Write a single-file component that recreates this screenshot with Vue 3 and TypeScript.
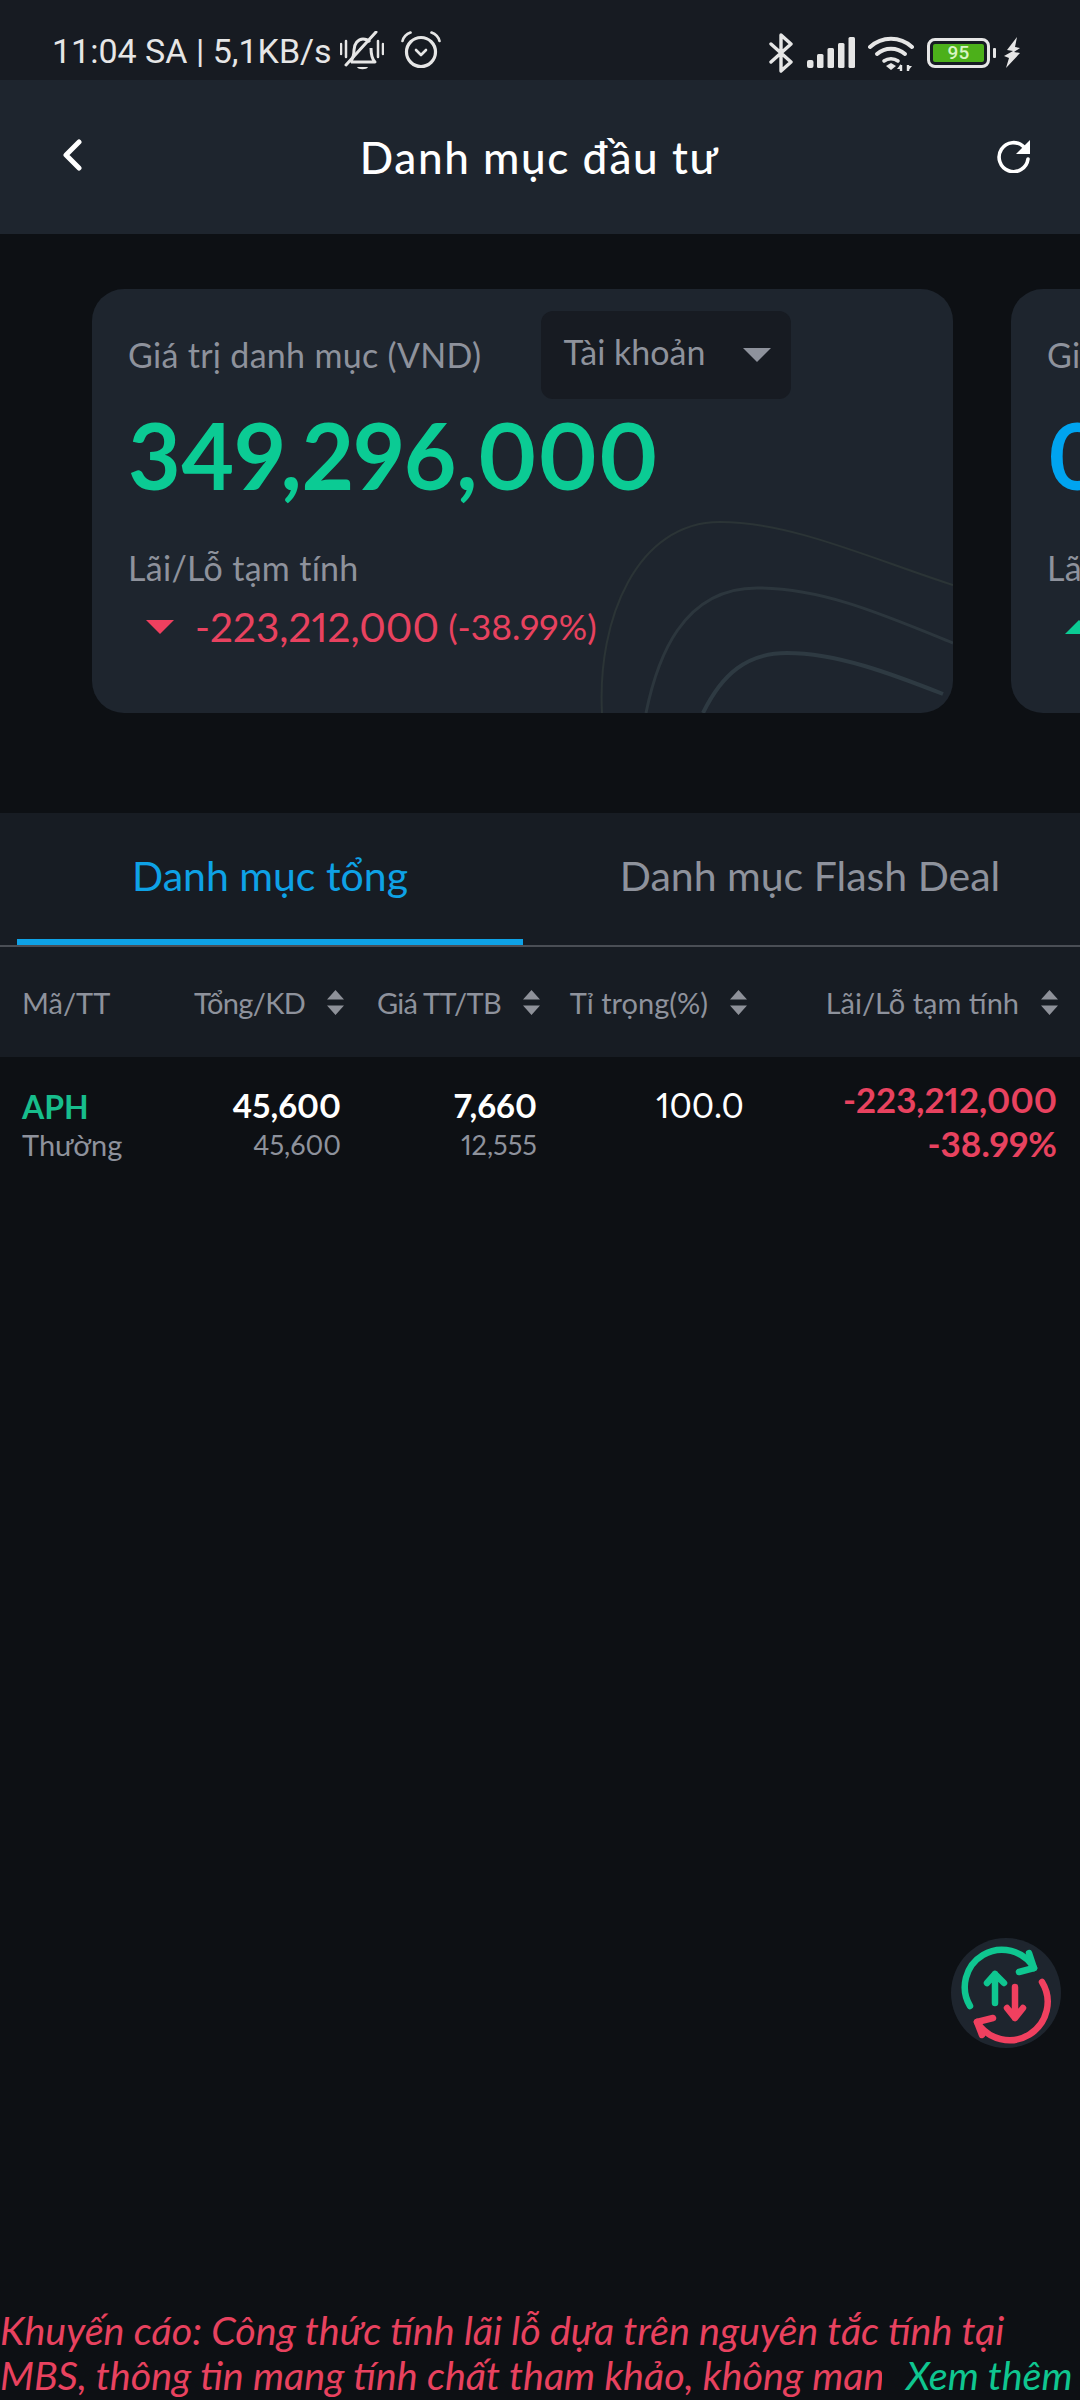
<template>
  <div class="screen">
    <div class="status-bar">
      <span class="status-text">11:04 SA | 5,1KB/s</span>
      <svg class="ic-bell" viewBox="0 0 44 40" width="44" height="40" fill="none" stroke="#e6e6e6">
        <path d="M1 13v10M6 10v16M38 10v16M43 13v10" stroke-width="2.5" stroke-linecap="round" />
        <path d="M10 31c3-3 4-6 4-12 0-6 4-11 9-11 3 0 5 1 7 3M31 17c0 7 1 11 4 14H11" stroke-width="3" stroke-linejoin="round" />
        <path d="M6 34L36 1" stroke-width="3" stroke-linecap="round" />
        <path d="M17 36h11c-1 3-10 3-11 0z" fill="#e6e6e6" stroke="none" />
      </svg>
      <svg class="ic-alarm" viewBox="0 0 40 38" width="40" height="38" fill="none" stroke="#e6e6e6">
        <circle cx="20" cy="21" r="14.5" stroke-width="3.2" />
        <path d="M1.5 10c1-4 4-7 8-8.5M38.500 10c-1-4-4-7-8-8.500" stroke-width="2.6" stroke-linecap="round" />
        <path d="M15 19l5 5 5-5" stroke-width="2.6" stroke-linecap="round" stroke-linejoin="round" />
      </svg>
      <div class="status-right">
        <svg class="ic-bt" viewBox="0 0 24 40" width="24" height="40" fill="none" stroke="#e6e6e6" stroke-width="3.4" stroke-linejoin="round" stroke-linecap="round">
          <path d="M2 11l20 18-10 9V2l10 9L2 29" />
        </svg>
        <svg viewBox="0 0 48 32" width="48" height="32" fill="#e6e6e6">
          <rect x="0" y="23" width="6.500" height="8" rx="2" />
          <rect x="10" y="17" width="6.500" height="14" rx="1.500" />
          <rect x="20.500" y="11" width="6.500" height="20" rx="1.500" />
          <rect x="31" y="6" width="6.500" height="25" rx="1.500" />
          <rect x="41.500" y="0" width="6.500" height="31" rx="1.500" />
        </svg>
        <svg viewBox="0 0 46 36" width="46" height="36" fill="none" stroke="#e6e6e6" stroke-linecap="round">
          <path d="M2 12c12-11 30-11 42 0" stroke-width="4" />
          <path d="M9 19c8-7 20-7 28 0" stroke-width="4" />
          <path d="M16 26c4-3 10-3 14 0" stroke-width="3.600" />
          <path d="M23 35l-5-4 5-3 5 3z" fill="#e6e6e6" stroke="none" />
          <path d="M33 30v6M40 30v6" stroke-width="2.400" stroke-linecap="butt" />
          <path d="M29 34h4v-5zM44 31h-4v5z" fill="#e6e6e6" stroke="none" />
        </svg>
        <div class="battery">
          <div class="battery-box"><span class="battery-fill">95</span></div>
          <div class="battery-cap"></div>
        </div>
        <svg class="bolt" viewBox="0 0 17 31" width="17" height="31" fill="#e6e6e6">
          <path d="M13 0L3 13l6 1L0 19l5 2-3 10 14-15-6-1 6-4-5-1z" />
        </svg>
      </div>
    </div>

    <header class="top-bar">
      <svg class="back" viewBox="0 0 20 32" width="20" height="32" fill="none" stroke="#fff" stroke-width="5" stroke-linecap="round" stroke-linejoin="round">
        <path d="M17 3L4 16l13 13" />
      </svg>
      <h1 class="title">Danh mục đầu tư</h1>
      <svg class="refresh" viewBox="0 0 34 34" width="34" height="34" fill="none">
        <path d="M27 8a14.500 14.500 0 1 0 4 12" stroke="#fff" stroke-width="3.600" stroke-linecap="round" />
        <path d="M33 1v14H19z" fill="#fff" />
      </svg>
    </header>

    <section class="cards">
      <article class="card">
        <svg class="card-lines" viewBox="0 0 861 424" width="861" height="424" fill="none">
          <path d="M510 424C505 330 545 233 628 233 700 233 780 270 861 296" stroke="#2b3436" stroke-width="2" />
          <path d="M554 424C565 370 590 299 665 299 730 299 790 325 861 354" stroke="#2c363d" stroke-width="3" />
          <path d="M611 424C630 385 655 364 695 364 745 364 800 385 851 405" stroke="#2e3a42" stroke-width="4" />
        </svg>
        <div class="card-top">
          <span class="label">Giá trị danh mục (VND)</span>
          <div class="select">
            <span>Tài khoản</span>
            <span class="caret"></span>
          </div>
        </div>
        <div class="value green">349,296,000</div>
        <div class="label pl-label">Lãi/Lỗ tạm tính</div>
        <div class="pl-row">
          <span class="tri-down"></span>
          <span class="pl-amount">-223,212,000</span>
          <span class="pl-percent">(-38.99%)</span>
        </div>
      </article>

      <article class="card">
        <div class="card-top">
          <span class="label">Giá trị danh mục (VND)</span>
        </div>
        <div class="value blue">0</div>
        <div class="label pl-label">Lãi/Lỗ tạm tính</div>
        <div class="pl-row">
          <span class="tri-up"></span>
          <span class="pl-amount green">0</span>
        </div>
      </article>
    </section>

    <nav class="tabs">
      <div class="tab active">Danh mục tổng</div>
      <div class="tab">Danh mục Flash Deal</div>
    </nav>

    <div class="table-head">
      <div class="th first">Mã/TT</div>
      <div v-for="col in columns" :key="col" class="th">
        <span>{{ col }}</span>
        <svg class="sort" viewBox="0 0 17 25" width="17" height="25" fill="#8e9199">
          <path d="M8.500 0l8.500 9.500H0zM8.500 25L17 15.500H0z" />
        </svg>
      </div>
    </div>

    <div class="table-row">
      <div class="cell first">
        <div class="symbol">APH</div>
        <div class="sub">Thường</div>
      </div>
      <div class="cell">
        <div class="strong">45,600</div>
        <div class="sub">45,600</div>
      </div>
      <div class="cell">
        <div class="strong">7,660</div>
        <div class="sub">12,555</div>
      </div>
      <div class="cell">
        <div class="plain">100.0</div>
      </div>
      <div class="cell loss">
        <div>-223,212,000</div>
        <div>-38.99%</div>
      </div>
    </div>

    <button class="fab">
      <svg viewBox="0 0 110 110" width="110" height="110" fill="none" stroke-width="6.500" stroke-linecap="round" stroke-linejoin="round">
        <path d="M19 68A37 37 0 0 1 83 30" stroke="#0fc690" />
        <path d="M78 15l5 15-15 4" stroke="#0fc690" />
        <path d="M44 65V36M36 45l8-9 9 9" stroke="#0fc690" />
        <path d="M91 44A38 38 0 0 1 26 84" stroke="#f0405f" />
        <path d="M42 80l-16 4 5 13" stroke="#f0405f" />
        <path d="M64 49v31M56 70l8 10 8-10" stroke="#f0405f" />
      </svg>
    </button>

    <footer class="notice">
      <div class="notice-line">Khuyến cáo: Công thức tính lãi lỗ dựa trên nguyên tắc tính tại</div>
      <div class="notice-line">
        <span class="notice-clip">MBS, thông tin mang tính chất tham khảo, không mang</span>
        <span class="more">Xem thêm</span>
      </div>
    </footer>
  </div>
</template>

<script setup lang="ts">
const columns: string[] = ['Tổng/KD', 'Giá TT/TB', 'Tỉ trọng(%)', 'Lãi/Lỗ tạm tính']
</script>

<style>
body {
  background: #0d1014;
}
</style>

<style scoped>
.screen {
  position: relative;
  display: flex;
  flex-direction: column;
  width: 1080px;
  height: 2400px;
  overflow: hidden;
  background: #0d1014;
  color: #fff;
  font-family: Lato, 'Noto Sans', sans-serif;
  font-variant-numeric: proportional-nums;
}

.status-bar {
  display: flex;
  align-items: center;
  height: 80px;
  padding: 22px 59px 0 52px;
  box-sizing: border-box;
  background: #171b22;
  color: #e6e6e6;
}

.status-text {
  font-family: Roboto, sans-serif;
  font-size: 34px;
  font-variant-numeric: normal;
  white-space: nowrap;
}

.ic-bell {
  margin-left: 8px;
  margin-top: -1px;
}

.ic-alarm {
  margin-left: 17px;
  margin-top: -2px;
}

.status-right {
  display: flex;
  align-items: center;
  gap: 13px;
  margin-left: auto;
  margin-top: 3px;
}

.ic-bt {
  margin-right: 1px;
}

.bolt {
  margin-left: -5px;
}

.battery {
  display: flex;
  align-items: center;
  gap: 3px;
}

.battery-box {
  display: flex;
  align-items: center;
  width: 63px;
  height: 30px;
  padding: 3px;
  box-sizing: border-box;
  border: 3px solid #e6e6e6;
  border-radius: 8px;
}

.battery-fill {
  width: 100%;
  height: 100%;
  background: #4cb01a;
  border-radius: 2px;
  color: #d8f5c4;
  font-family: Roboto, sans-serif;
  font-size: 19px;
  font-weight: 500;
  line-height: 18px;
  text-align: center;
}

.battery-cap {
  width: 3px;
  height: 10px;
  background: #e6e6e6;
  border-radius: 1px;
}

.top-bar {
  display: flex;
  align-items: center;
  justify-content: space-between;
  height: 154px;
  padding: 0 49px 0 62px;
  box-sizing: border-box;
  background: #1e252e;
}

.back {
  margin-top: -4px;
}

.refresh {
  margin-top: -3px;
}

.title {
  margin: 0;
  font-size: 44px;
  font-weight: 500;
  letter-spacing: 1.6px;
  line-height: 54px;
}

.cards {
  display: flex;
  gap: 58px;
  padding: 55px 0 100px 92px;
  overflow: hidden;
}

.card {
  position: relative;
  flex: 0 0 861px;
  height: 424px;
  padding: 22px 36px 0;
  box-sizing: border-box;
  overflow: hidden;
  background: #1e252e;
  border-radius: 32px;
}

.card-lines {
  position: absolute;
  left: 0;
  top: 0;
}

.card-top {
  position: relative;
  display: flex;
  align-items: center;
  height: 88px;
}

.label {
  color: #8e929c;
  font-size: 34px;
  letter-spacing: 0.3px;
  line-height: 44px;
  white-space: nowrap;
}

.select {
  display: flex;
  align-items: center;
  justify-content: space-between;
  width: 250px;
  height: 88px;
  margin-left: 60px;
  padding: 0 20px 8px 22px;
  box-sizing: border-box;
  background: #171b22;
  border-radius: 12px;
  color: #8e929c;
  font-size: 34px;
}

.caret {
  width: 0;
  height: 0;
  margin-top: 8px;
  border-left: 14px solid transparent;
  border-right: 14px solid transparent;
  border-top: 14px solid #8e929c;
}

.value {
  position: relative;
  margin-top: 6px;
  font-size: 91px;
  font-weight: 700;
  line-height: 100px;
}

.green {
  color: #0bcb94;
}

.blue {
  color: #00a4f0;
}

.pl-label {
  position: relative;
  margin-top: 41px;
}

.pl-row {
  position: relative;
  display: flex;
  align-items: center;
  margin-top: 14px;
  padding-left: 18px;
  color: #e8425f;
  line-height: 46px;
  white-space: nowrap;
}

.tri-down {
  width: 0;
  height: 0;
  margin-right: 21px;
  border-left: 14px solid transparent;
  border-right: 14px solid transparent;
  border-top: 14px solid #f0405f;
}

.tri-up {
  width: 0;
  height: 0;
  margin-right: 21px;
  border-left: 14px solid transparent;
  border-right: 14px solid transparent;
  border-bottom: 14px solid #0bcb94;
}

.pl-amount {
  font-size: 40.5px;
}

.pl-percent {
  margin-left: 9px;
  font-size: 35.5px;
}

.tabs {
  display: flex;
  height: 134px;
  background: #171c23;
  border-bottom: 2px solid #4a4e55;
  box-sizing: border-box;
}

.tab {
  position: relative;
  flex: 1;
  padding-top: 38px;
  color: #8e929c;
  font-size: 41px;
  line-height: 50px;
  text-align: center;
}

.tab.active {
  color: #0ea2e6;
}

.tab.active::after {
  content: '';
  position: absolute;
  left: 17px;
  right: 17px;
  bottom: 0;
  height: 6px;
  background: #0ea2e6;
}

.table-head,
.table-row {
  display: grid;
  grid-template-columns: 148px 174px 196px 207px 311px;
  padding: 0 22px;
}

.table-head {
  align-items: center;
  height: 110px;
  background: #171c23;
}

.th {
  display: flex;
  align-items: center;
  justify-content: flex-end;
  gap: 22px;
  color: #8e929c;
  font-size: 29px;
  white-space: nowrap;
}

.th:nth-child(2) span,
.th:nth-child(3) span {
  letter-spacing: -0.7px;
}

.th.first {
  justify-content: flex-start;
}

.table-row {
  padding-top: 18px;
}

.cell {
  padding-right: 3px;
  text-align: right;
}

.cell.first {
  text-align: left;
}

.symbol {
  margin-top: 10px;
  color: #17bd8c;
  font-size: 32px;
  font-weight: 700;
  line-height: 44px;
}

.strong {
  margin-top: 7px;
  font-size: 33px;
  font-weight: 700;
  line-height: 46px;
}

.plain {
  margin-top: 7px;
  font-size: 34px;
  line-height: 46px;
}

.sub {
  margin-top: -3px;
  color: #8e929c;
  font-size: 27px;
  line-height: 40px;
}

.symbol + .sub {
  margin-top: -4px;
  font-size: 29px;
}

.loss {
  padding-top: 2px;
  padding-right: 1px;
  color: #e8425f;
  font-size: 35px;
  font-weight: 700;
  line-height: 44px;
}

.fab {
  position: absolute;
  left: 951px;
  top: 1938px;
  width: 110px;
  height: 110px;
  padding: 0;
  background: #1e252e;
  border: none;
  border-radius: 50%;
}

.fab svg {
  display: block;
}

.notice {
  position: absolute;
  left: 0;
  right: 0;
  top: 2307px;
  font-size: 39.5px;
  font-style: italic;
  line-height: 45px;
  color: #e8425f;
}

.notice-line {
  display: flex;
  align-items: baseline;
  white-space: nowrap;
}

.notice-clip {
  width: 882px;
  margin-right: 24px;
  overflow: hidden;
}

.more {
  color: #0fc690;
}
</style>
